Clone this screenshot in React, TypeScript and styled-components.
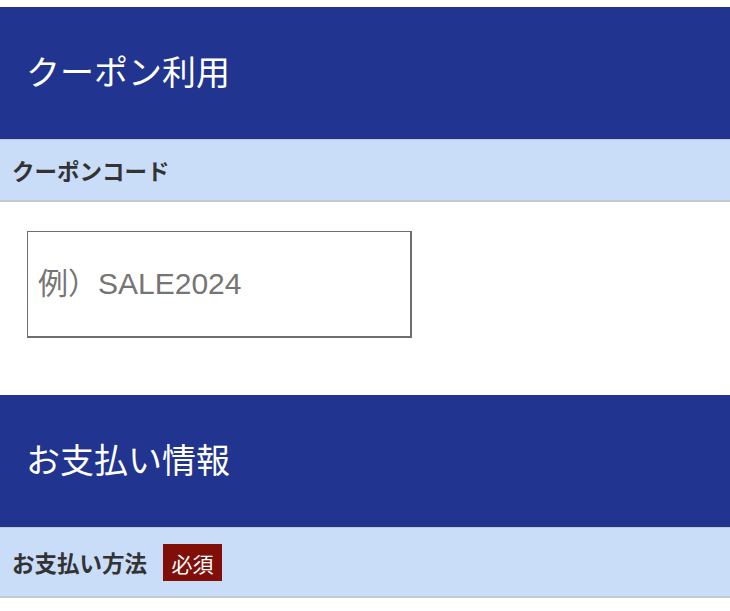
import React from "react"
import styled, { createGlobalStyle } from "styled-components"

const GlobalStyle = createGlobalStyle`
    body {
        margin: 0;
        background: #ffffff;
        font-family: "Noto Sans CJK JP", "Noto Sans", sans-serif;
    }
`

export default function App() {
    return (
        <>
            <GlobalStyle />
            <Page>
                <Section>
                    <SectionTitle>クーポン利用</SectionTitle>
                    <FieldLabel>
                        <LabelText>クーポンコード</LabelText>
                    </FieldLabel>
                    <FieldBody>
                        <CouponInput type="text" placeholder="例）SALE2024" />
                    </FieldBody>
                </Section>
                <Section>
                    <SectionTitle>お支払い情報</SectionTitle>
                    <FieldLabel>
                        <LabelText>お支払い方法</LabelText>
                        <Required>必須</Required>
                    </FieldLabel>
                </Section>
            </Page>
        </>
    )
}

const Page = styled.main`
    padding-top: 7px;
    width: 100%;
`

const Section = styled.section`
    display: flex;
    flex-direction: column;
`

const SectionTitle = styled.h2`
    box-sizing: border-box;
    margin: 0;
    height: 132px;
    display: flex;
    align-items: center;
    padding: 0 26px 6px;
    background: #203490;
    color: #ffffff;
    font-size: 34px;
    font-weight: 400;
`

const FieldLabel = styled.div`
    display: flex;
    align-items: center;
    gap: 16px;
    padding: 16px 12px 15px;
    min-height: 29px;
    background: #c9ddf8;
    border-top: 1px solid #c6c9ce;
    border-bottom: 2px solid #c6c9ce;
`

const LabelText = styled.span`
    font-size: 22.5px;
    font-weight: 700;
    color: #333333;
    line-height: 29px;
`

const Required = styled.span`
    display: inline-flex;
    align-items: center;
    justify-content: center;
    width: 59px;
    height: 37px;
    background: #7f0f08;
    color: #ffffff;
    font-size: 21px;
`

const FieldBody = styled.div`
    padding: 29px 27px 57px;
`

const CouponInput = styled.input`
    box-sizing: border-box;
    width: 385px;
    height: 107px;
    padding: 0 10px;
    border: 1px solid #6e6e6e;
    border-right-width: 2px;
    border-bottom-width: 2px;
    font-size: 30px;
    font-family: "Liberation Sans", "Noto Sans CJK JP", sans-serif;
    color: #333333;
    outline: none;

    &::placeholder {
        color: #757575;
    }
`
